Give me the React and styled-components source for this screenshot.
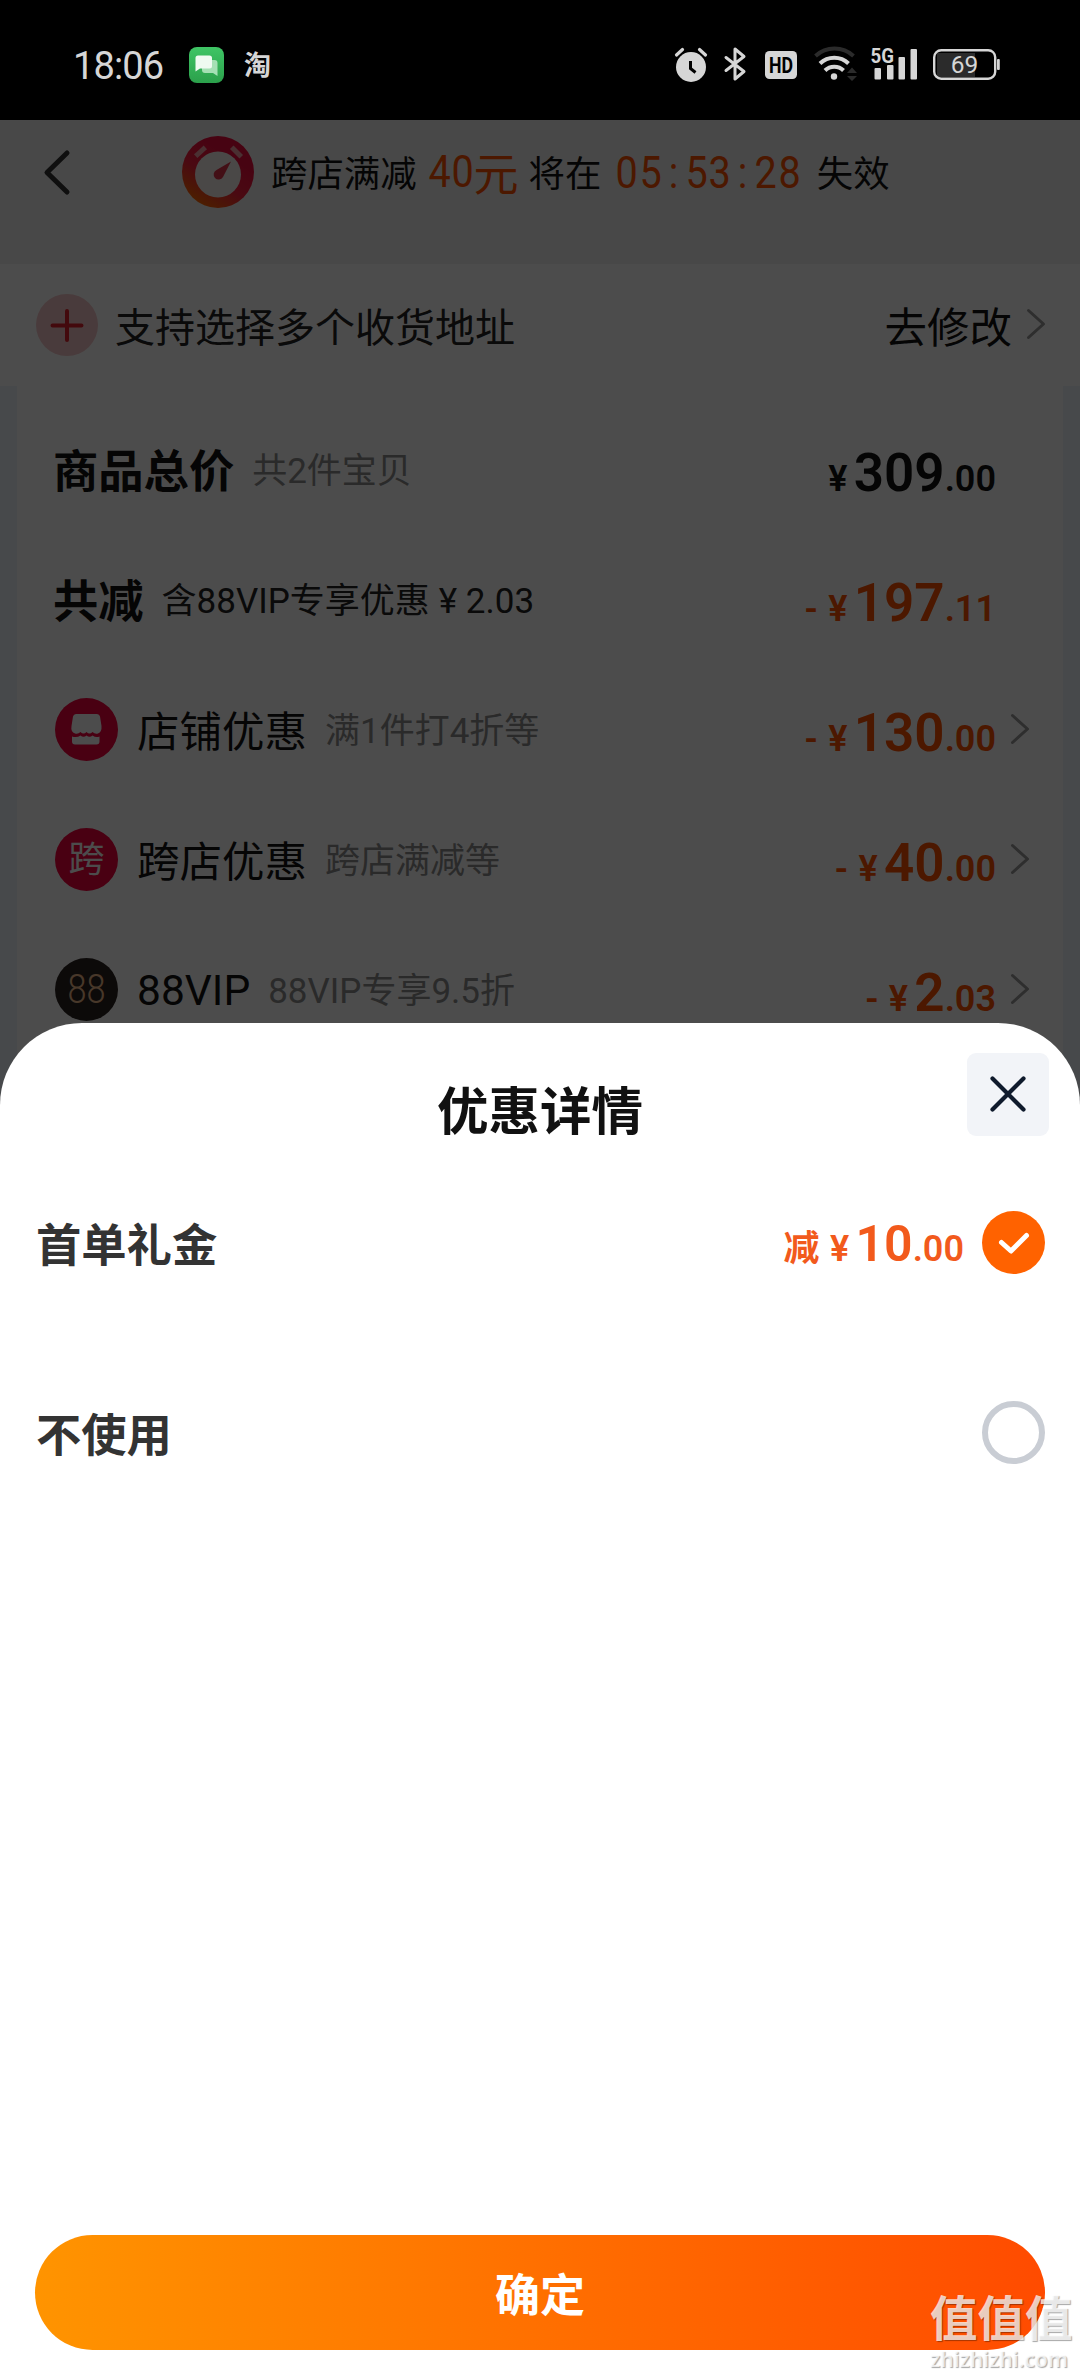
import React, { useState } from 'react';
import styled, { createGlobalStyle } from 'styled-components';


const GlobalStyle = createGlobalStyle`
    * { box-sizing: border-box; }
    body {
        margin: 0;
        background: #000;
        font-family: Roboto, "Noto Sans CJK SC", sans-serif;
    }
`

const Phone = styled.div`
position: relative;
width: 1080px;
height: 2376px;
overflow: hidden;
display: flex;
flex-direction: column;
`

/* status bar */

const StatusBar = styled.div`
height: 120px;
flex: none;
display: flex;
justify-content: space-between;
padding: 47px 80px 0 73px;
background: #000;
color: #d6d6d6;
`

const StatusGroup = styled.div`
display: flex;
align-items: center;
height: 36px;
`

const Clock = styled.span`
font-size: 38px;
letter-spacing: -0.9px;
line-height: 36px;
padding-top: 2px;
width: 116px;
`

const TaoMark = styled.span`
font-family: "Noto Sans CJK SC", sans-serif;
font-size: 27px;
font-weight: 700;
line-height: 36px;
margin: 0 0 3px 20px;
`

/* page below the sheet */

const Page = styled.div`
position: relative;
flex: 1;
background: #eef3fc;
`

const Mask = styled.div`
position: absolute;
inset: 0;
background: rgba(0, 0, 0, 0.7);
`

const Header = styled.div`
height: 144px;
display: flex;
align-items: flex-start;
padding: 15px 0 0 43px;
background: #f2f2f2;
`

const BackIcon = styled.svg`
width: 28px;
height: 48px;
margin: 14px 111px 0 0;
`

const Notice = styled.div`
display: flex;
align-items: center;
height: 74px;
font-size: 36.4px;
color: #111;
white-space: nowrap;
`

const NoticeText = styled.span`
margin-left: ${props => props.$left}px;
padding-bottom: 2px;
`

const NoticeAmount = styled.span`
display: flex;
align-items: center;
margin-left: 11px;
padding-bottom: 2px;
width: 92px;
font-size: 45px;
color: #ff5000;
`

const Digit = styled.span`
width: ${props => props.$width || 23.2}px;
display: inline-flex;
justify-content: center;
transform: scaleX(0.88);
`

const Timer = styled.span`
display: flex;
margin-left: 14px;
font-size: 45px;
color: #ff5000;
`

const AddressRow = styled.div`
height: 122px;
display: flex;
align-items: center;
padding: 0 34px 0 36px;
background: #fff;
color: #222;
font-size: 40px;
`

const PlusBadge = styled.svg`
width: 62px;
height: 62px;
margin-right: 17px;
`

const EditLink = styled.span`
display: flex;
align-items: center;
margin-left: auto;
padding-bottom: 2px;
font-size: 42.5px;
color: #111;
`

const ArrowIcon = styled.svg`
width: 20px;
height: 32px;
margin-left: ${props => props.$left}px;
flex: none;
`

const Card = styled.div`
height: 700px;
margin: 0 17px;
padding: 18px 33px 0 38px;
background: #fff;
`

const Row = styled.div`
height: 130px;
display: flex;
align-items: center;
white-space: nowrap;
`

const RowBadge = styled.svg`
width: 63px;
height: 63px;
margin-right: 19px;
`

const RowTitle = styled.span`
margin-left: ${props => props.$bold ? -2 : 0}px;
padding-top: ${props => props.$latin ? 3 : 0}px;
padding-bottom: ${props => props.$latin ? 0 : 2}px;
font-size: ${props => props.$bold ? 45.3 : 42.5}px;
font-weight: ${props => props.$bold ? 700 : 400};
color: #111;
`

const RowHint = styled.span`
margin-left: 18px;
padding-bottom: 3px;
font-size: 35px;
color: ${props => props.$dark ? '#222' : '#8e8e8e'};
`

const Yen = styled.span`
display: inline-block;
width: 36px;
padding-left: ${props => props.$shift || 0}px;
text-align: center;
`

const PriceBox = styled.span`
display: flex;
align-items: baseline;
margin-left: auto;
margin-right: ${props => props.$arrow ? 0 : 34}px;
padding-top: ${props => props.$drop}px;
font-size: 36px;
font-weight: 600;
line-height: 60px;
color: ${props => props.$dark ? '#111' : props.$color || '#ff5000'};
`

const PriceInt = styled.span`
font-size: ${props => props.$size}px;
`

/* bottom sheet */

const Sheet = styled.div`
position: absolute;
left: 0;
right: 0;
top: 1023px;
bottom: 0;
display: flex;
flex-direction: column;
background: #fff;
border-radius: 82px 82px 0 0;
`

const SheetHeader = styled.div`
height: 156px;
display: grid;
grid-template-columns: 82px 1fr 82px;
align-items: start;
padding: 30px 31px 0;
`

const SheetTitle = styled.h1`
grid-column: 2;
margin: 22px 0 0;
text-align: center;
font-size: 51.5px;
font-weight: 700;
line-height: 76px;
color: #111;
`

const CloseButton = styled.button`
width: 82px;
height: 83px;
padding: 2px 0 0;
border: none;
border-radius: 9px;
background: #f2f4f8;
cursor: pointer;
`

const Option = styled.div`
height: 126px;
margin-bottom: 64px;
padding: 0 35px 0 36px;
display: flex;
align-items: center;
cursor: pointer;
`

const OptionName = styled.span`
padding-bottom: 1px;
font-size: 45.3px;
font-weight: 700;
color: #333;
`

const Radio = styled.svg`
width: 63px;
height: 63px;
margin-left: ${props => props.$push ? 'auto' : '18px'};
`

const ConfirmButton = styled.button`
height: 115px;
margin: auto 35px 26px;
padding: 0;
border: none;
border-radius: 58px;
background: linear-gradient(90deg, #ff9400, #ff4b00);
color: #fff;
font-family: inherit;
font-size: 45px;
font-weight: 700;
cursor: pointer;
`

const Watermark = styled.div`
position: absolute;
right: 7px;
bottom: 3px;
width: 143px;
display: flex;
flex-direction: column;
gap: 2px;
color: rgba(255, 255, 255, 0.75);
text-shadow: 1px 1px 1px rgba(0, 0, 0, 0.35);
white-space: nowrap;
`

const WatermarkName = styled.span`
font-family: "Noto Sans CJK SC", sans-serif;
font-size: 47.5px;
font-weight: 700;
line-height: 55px;
`

const WatermarkSite = styled.span`
font-family: "Noto Sans", sans-serif;
font-size: 21px;
font-weight: 600;
line-height: 28px;
`


const ROWS = [
    { title: '商品总价', bold: true, hint: '共2件宝贝', int: '309', dec: '.00', dark: true },
    { title: '共减', bold: true, hint: '含88VIP专享优惠', hintAmount: '2.03', sign: '-', int: '197', dec: '.11' },
    { badge: 'shop', title: '店铺优惠', hint: '满1件打4折等', sign: '-', int: '130', dec: '.00', arrow: true },
    { badge: 'cross', title: '跨店优惠', hint: '跨店满减等', sign: '-', int: '40', dec: '.00', arrow: true },
    { badge: 'vip', title: '88VIP', latin: true, hint: '88VIP专享9.5折', sign: '-', int: '2', dec: '.03', arrow: true },
]


const MessageIcon = () => (
    <svg width="35" height="36" viewBox="0 0 35 36">
        <defs>
            <linearGradient id="msg" x1="0" y1="0" x2="0" y2="1">
                <stop offset="0" stopColor="#3fc565" />
                <stop offset="1" stopColor="#2ba04b" />
            </linearGradient>
        </defs>
        <rect width="35" height="36" rx="8" fill="url(#msg)" />
        <path d="M13 13h12.500a3 3 0 0 1 3 3v13l-4.500-3h-8a3 3 0 0 1-3-3z" fill="#a5e0b4" />
        <path d="M9 8.500h11.500a2.500 2.500 0 0 1 2.500 2.500v8a2.500 2.500 0 0 1-2.500 2.500h-9.500l-4.500 3v-13.500a2.500 2.500 0 0 1 2.500-2.500z" fill="#effaf1" />
    </svg>
)

const StatusIcons = () => (
    <svg width="326" height="56" viewBox="0 -10 326 56" fill="#d6d6d6">
        {/* alarm */}
        <circle cx="17" cy="20" r="15" />
        <path d="M2.500 8l6-5.500M31.500 8l-6-5.500" stroke="#d6d6d6" strokeWidth="3.200" strokeLinecap="round" />
        <path d="M16.500 14v7.500l5 4" fill="none" stroke="#000" strokeWidth="3" />
        {/* bluetooth */}
        <path d="M52 10.500l18 14-9 7.500v-30l9 7.500-18 14" fill="none" stroke="#d6d6d6" strokeWidth="3" strokeLinejoin="round" strokeLinecap="round" />
        {/* hd */}
        <rect x="91" y="4" width="32" height="28" rx="4.500" />
        <text x="107" y="25.500" textAnchor="middle" fontSize="21.500" fontWeight="700" fill="#000" textLength="24" lengthAdjust="spacingAndGlyphs">HD</text>
        {/* wifi */}
        <g fill="none" strokeWidth="4">
            <path d="M141.500 9a28 28 0 0 1 38 0" stroke="#2b2b2b" />
            <path d="M146 16.500a20.500 20.500 0 0 1 28.500 0" stroke="#d6d6d6" />
            <path d="M151 23.500a13 13 0 0 1 18.500 0" stroke="#d6d6d6" />
        </g>
        <circle cx="160" cy="29.500" r="3.200" />
        <path d="M173 26l5-5.500 5 5.500zM173 29l5 5 5-5z" fill="#2b2b2b" />
        {/* 5G signal */}
        <text x="196.500" y="15.500" fontSize="20.500" fontWeight="700" textLength="23.500" lengthAdjust="spacingAndGlyphs">5G</text>
        <rect x="200.500" y="21" width="6.500" height="11.500" rx="1" />
        <rect x="213" y="18" width="6.500" height="14.500" rx="1" />
        <rect x="224.500" y="10" width="6.500" height="22.500" rx="1" />
        <rect x="236.500" y="2" width="6.500" height="30.500" rx="1" />
        {/* battery */}
        <rect x="263" y="6" width="38" height="24" fill="#2b2b2b" />
        <rect x="260.200" y="3.200" width="61" height="28.500" rx="7" fill="none" stroke="#d6d6d6" strokeWidth="2.400" />
        <rect x="323" y="12" width="2.800" height="11" rx="1" />
        <text x="290.500" y="26" textAnchor="middle" fontSize="24.500">69</text>
    </svg>
)

const StopwatchIcon = () => (
    <svg width="72" height="72" viewBox="0 0 72 72">
        <defs>
            <linearGradient id="watch" x1="0.15" y1="0.9" x2="0.6" y2="0.2">
                <stop offset="0" stopColor="#ff6a00" />
                <stop offset="0.5" stopColor="#f8203c" />
                <stop offset="1" stopColor="#ee0a3c" />
            </linearGradient>
        </defs>
        <circle cx="36" cy="36" r="36" fill="url(#watch)" />
        <path d="M15.500 18.500l6-5.500M51.500 13l6 6" stroke="#f7a0a8" strokeWidth="5" strokeLinecap="square" />
        <circle cx="36" cy="38.500" r="23" fill="#f7f0ee" />
        <path d="M49 25.500L41 41a5 5 0 1 1-6.500-7z" fill="#e0344a" />
    </svg>
)

const Arrow = ({ left }) => (
    <ArrowIcon $left={left} viewBox="0 0 20 32">
        <path d="M2.500 2.500L17.500 16 2.500 29.500" fill="none" stroke="#999" strokeWidth="3" strokeLinecap="round" strokeLinejoin="round" />
    </ArrowIcon>
)

const Badge = ({ type }) => (
    <RowBadge viewBox="0 0 63 63">
        <circle cx="31.500" cy="31.500" r="31.500" fill={type === 'vip' ? '#2a2220' : '#f3003c'} />
        {type === 'shop' && (
            <g fill="#fff">
                <path d="M21 16h21q2.500 0 3 2.500l1.500 9.500q.5 6-3.500 7.500-3 1-5.500-1.500-3 3-6 0-3 3-6 0-2.500 2.500-5.500 1.500-4.500-1.500-3.500-7.500l1.500-9.500q.5-2.500 3-2.500z" />
                <path d="M17 38.500q5 1.500 8.500-1 3 2.500 6 0 3 2.500 6 0 3.500 2.500 7 1v5q0 3-3 3H20q-3 0-3-3z" />
            </g>
        )}
        {type === 'cross' && <text x="31.500" y="44" textAnchor="middle" fontSize="36" fill="#fff">跨</text>}
        {type === 'vip' && <text x="31.500" y="45" textAnchor="middle" fontSize="40" fontWeight="300" fill="#f0bd8c" textLength="38" lengthAdjust="spacingAndGlyphs">88</text>}
    </RowBadge>
)

const Price = ({ sign, int, dec, dark, arrow, size = 53, drop = 13, color }) => (
    <PriceBox $dark={dark} $arrow={arrow} $color={color} $drop={drop}>
        {sign}<Yen $shift={4}>¥</Yen><PriceInt $size={size}>{int}</PriceInt>{dec}
    </PriceBox>
)

const DiscountRow = (props) => (
    <Row>
        {props.badge && <Badge type={props.badge} />}
        <RowTitle $bold={props.bold} $latin={props.latin}>{props.title}</RowTitle>
        <RowHint $dark={props.hintAmount}>
            {props.hint}
            {props.hintAmount && <><Yen>¥</Yen>{props.hintAmount}</>}
        </RowHint>
        <Price {...props} />
        {props.arrow && <Arrow left={14} />}
    </Row>
)

const RadioMark = ({ checked, push }) => (
    <Radio $push={push} viewBox="0 0 63 63">
        {checked ? (
            <>
                <circle cx="31.500" cy="31.500" r="31.500" fill="#ff6200" />
                <path d="M19.500 31.500l9.500 8.500 15.500-15.500" fill="none" stroke="#fff" strokeWidth="5" strokeLinecap="round" strokeLinejoin="round" />
            </>
        ) : (
            <circle cx="31.500" cy="31.500" r="28.500" fill="none" stroke="#c9cdd4" strokeWidth="6" />
        )}
    </Radio>
)


const App = () => {

    const [selected, setSelected] = useState('gift')

    return (
        <>
            <GlobalStyle />
            <Phone>
                <StatusBar>
                    <StatusGroup>
                        <Clock>18:06</Clock>
                        <MessageIcon />
                        <TaoMark>淘</TaoMark>
                    </StatusGroup>
                    <StatusGroup>
                        <StatusIcons />
                    </StatusGroup>
                </StatusBar>

                <Page>
                    <Header>
                        <BackIcon viewBox="0 0 28 48">
                            <path d="M24 4L4 23.500 24 43" fill="none" stroke="#333" strokeWidth="5" strokeLinecap="round" strokeLinejoin="round" />
                        </BackIcon>
                        <Notice>
                            <StopwatchIcon />
                            <NoticeText $left={17}>跨店满减</NoticeText>
                            <NoticeAmount>
                                <Digit $width={23}>4</Digit>
                                <Digit $width={23}>0</Digit>元
                            </NoticeAmount>
                            <NoticeText $left={9}>将在</NoticeText>
                            <Timer>
                                {'05:53:28'.split('').map((c, i) => <Digit key={i}>{c}</Digit>)}
                            </Timer>
                            <NoticeText $left={16}>失效</NoticeText>
                        </Notice>
                    </Header>

                    <AddressRow>
                        <PlusBadge viewBox="0 0 62 62">
                            <circle cx="31" cy="31" r="31" fill="#f5c6c8" />
                            <path d="M31 17v29M16.500 31.500h29" stroke="#e0202c" strokeWidth="4" strokeLinecap="round" />
                        </PlusBadge>
                        支持选择多个收货地址
                        <EditLink>去修改<Arrow left={14} /></EditLink>
                    </AddressRow>

                    <Card>
                        {ROWS.map(row => <DiscountRow key={row.title} {...row} />)}
                    </Card>
                    <Mask />
                </Page>

                <Sheet>
                    <SheetHeader>
                        <SheetTitle>优惠详情</SheetTitle>
                        <CloseButton>
                            <svg width="40" height="40" viewBox="0 0 40 40">
                                <path d="M4.500 4.500l31 31M35.500 4.500l-31 31" stroke="#0f1a2c" strokeWidth="4.200" strokeLinecap="round" />
                            </svg>
                        </CloseButton>
                    </SheetHeader>
                    <Option onClick={() => setSelected('gift')}>
                        <OptionName>首单礼金</OptionName>
                        <Price sign="减" int="10" dec=".00" size={50} drop={9} arrow color="#f25a1c" />
                        <RadioMark checked={selected === 'gift'} />
                    </Option>
                    <Option onClick={() => setSelected('none')}>
                        <OptionName>不使用</OptionName>
                        <RadioMark push checked={selected === 'none'} />
                    </Option>
                    <ConfirmButton>确定</ConfirmButton>
                </Sheet>

                <Watermark>
                    <WatermarkName>值值值</WatermarkName>
                    <WatermarkSite>zhizhizhi.com</WatermarkSite>
                </Watermark>
            </Phone>
        </>
    )
}

export default App;
